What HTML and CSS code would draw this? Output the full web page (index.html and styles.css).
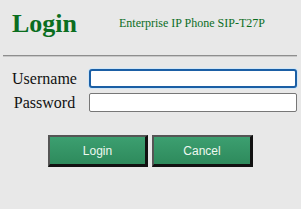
FILE: index.html
```html
<!DOCTYPE html>
<html>
<head>
<meta charset="utf-8">
<link rel="stylesheet" href="styles.css">
</head>
<body>
<div class="page">
  <div class="header">
    <h1 class="title">Login</h1>
    <div class="model">Enterprise IP Phone SIP-T27P</div>
  </div>
  <div class="rule"></div>
  <div class="form">
    <label class="label" for="u">Username</label>
    <input class="field focused" id="u" type="text" autofocus>
    <label class="label" for="p">Password</label>
    <input class="field" id="p" type="password">
  </div>
  <div class="buttons">
    <button class="btn">Login</button>
    <button class="btn">Cancel</button>
  </div>
</div>
</body>
</html>
```

FILE: styles.css
```css
html, body {
  margin: 0;
  padding: 0;
  background: #e8e8e8;
}
.page {
  width: 301px;
  height: 209px;
  font-family: "Liberation Serif", "Times New Roman", serif;
}
.header {
  display: flex;
  align-items: flex-start;
  height: 55px;
  box-sizing: border-box;
  padding: 8px 0 0 12px;
}
.title {
  width: 107px;
  margin: 0;
  font-size: 26px;
  font-weight: bold;
  color: #0b6e1f;
  line-height: 32px;
}
.model {
  margin-top: 8px;
  font-size: 12px;
  line-height: 14px;
  color: #0b6e1f;
}
.rule {
  margin: 0 4px 0 3px;
  height: 1px;
  background: #8e8e8e;
  border-bottom: 1px solid #c8c8c8;
}
.form {
  display: grid;
  grid-template-columns: 83px 1fr;
  column-gap: 3px;
  row-gap: 5px;
  margin: 12px 4px 0 3px;
  align-items: center;
}
.label {
  text-align: center;
  font-size: 16px;
  color: #111;
}
.field {
  box-sizing: border-box;
  height: 19px;
  margin: 0;
  padding: 0 3px;
  border: 1px solid #777;
  border-radius: 2px;
  background: #fff;
  font-size: 13px;
  outline: none;
}
.field.focused {
  border: 2px solid #1b5fa5;
  border-radius: 3px;
  box-shadow: 0 0 0 1px #cfe6f8;
}
.buttons {
  display: flex;
  gap: 4px;
  margin: 23px 0 0 48px;
}
.btn {
  box-sizing: border-box;
  width: 100px;
  height: 32px;
  margin: 0;
  padding: 0;
  border-style: solid;
  border-width: 2px 3px 3px 2px;
  border-color: #555 #111 #111 #555;
  background: linear-gradient(#3c9f70, #2e8a5c);
  color: #eef8f0;
  font-family: "Liberation Sans", Arial, sans-serif;
  font-size: 12px;
}
.btn + .btn {
  width: 101px;
}
```
